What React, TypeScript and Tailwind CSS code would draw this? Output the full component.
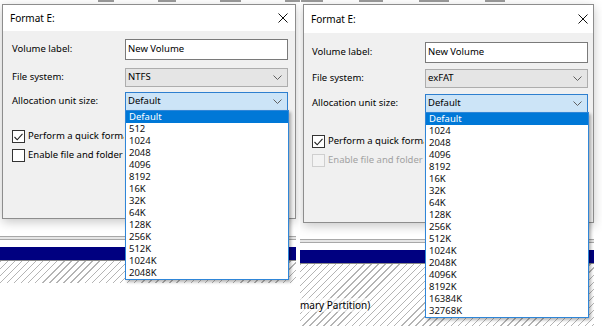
import clsx from "clsx";

const leftSizes = ["Default", "512", "1024", "2048", "4096", "8192", "16K", "32K", "64K", "128K", "256K", "512K", "1024K", "2048K"];
const rightSizes = ["Default", "1024", "2048", "4096", "8192", "16K", "32K", "64K", "128K", "256K", "512K", "1024K", "2048K", "4096K", "8192K", "16384K", "32768K"];

function Chevron() {
  return (
    <svg width="9" height="5" viewBox="0 0 9 5" className="shrink-0">
      <polyline points="0.5,0.5 4.5,4.5 8.5,0.5" fill="none" stroke="#606060" strokeWidth="1" />
    </svg>
  );
}

function CloseX() {
  return (
    <svg width="10" height="10" viewBox="0 0 10 10">
      <line x1="0.5" y1="0.5" x2="9.5" y2="9.5" stroke="#111" strokeWidth="1" />
      <line x1="9.5" y1="0.5" x2="0.5" y2="9.5" stroke="#111" strokeWidth="1" />
    </svg>
  );
}

function Checkbox({ checked, disabled, label }: { checked?: boolean; disabled?: boolean; label: string }) {
  return (
    <div className="flex items-center gap-[3px] h-[13px]">
      <span
        className={clsx(
          "w-[13px] h-[13px] shrink-0 border flex items-center justify-center",
          disabled ? "border-[#cfcfcf] bg-[#f3f3f3]" : "border-[#333333] bg-white"
        )}
      >
        {checked && (
          <svg width="9" height="8" viewBox="0 0 9 8">
            <polyline points="0.5,4 3.2,6.8 8.5,0.8" fill="none" stroke="#222" strokeWidth="1.1" />
          </svg>
        )}
      </span>
      {/* the open list covers the rest of the label */}
      <span className={clsx("w-[96px] overflow-hidden whitespace-nowrap", disabled ? "text-[#a2a2a2]" : "text-black")}>{label}</span>
    </div>
  );
}

function Panel({ right }: { right?: boolean }) {
  const sizes = right ? rightSizes : leftSizes;
  const fs = right ? "exFAT" : "NTFS";

  return (
    <div className={clsx("relative h-[326px] overflow-hidden bg-white flex flex-col", right ? "w-[302px]" : "w-[300px]")}>
      {/* bottoms of the volume list row behind the dialog */}
      <div className={clsx("h-[4px] shrink-0 flex items-start", right ? "gap-[36px] pl-[1px]" : "gap-[44px] pl-[98px]")}>
        <span className="w-[22px] h-[2px] bg-[#9a9a9a]" />
        <span className="w-[24px] h-[2px] bg-[#9a9a9a]" />
        <span className="w-[30px] h-[2px] bg-[#9a9a9a]" />
        <span className="w-[20px] h-[2px] bg-[#9a9a9a]" />
      </div>

      <div
        className={clsx(
          "relative shrink-0 border border-[#8d8d8d] bg-[#f0f0f0] flex flex-col shadow-[0_3px_10px_rgba(0,0,0,0.22)]",
          right ? "ml-[3px] w-[291px] h-[219px]" : "ml-[2px] w-[294px] h-[215px]"
        )}
      >
        <div className={clsx("bg-white flex items-center justify-between shrink-0 text-[10px] text-black", right ? "h-[28px] pl-[7px] pr-[5px]" : "h-[26px] pl-[7px] pr-[7px]")}>
          <span>Format E:</span>
          <CloseX />
        </div>

        <div className={clsx("flex flex-col text-[9.5px] text-black", right ? "pt-[9px] pl-[8px] pr-[5px]" : "pt-[8px] pl-[9px] pr-[7px]")}>
          <div className="flex items-center">
            <span className="w-[113px]">Volume label:</span>
            <div className="w-[163px] h-[21px] bg-white border border-[#7a7a7a] flex items-center pl-[2px]">New Volume</div>
          </div>
          <div className={clsx("flex items-center", right ? "mt-[6px]" : "mt-[8px]")}>
            <span className="w-[113px]">File system:</span>
            <div className="w-[163px] h-[19px] bg-[#e5e5e5] border border-[#adadad] flex items-center justify-between pl-[2px] pr-[5px]">
              <span>{fs}</span>
              <Chevron />
            </div>
          </div>
          <div className={clsx("flex items-center", right ? "mt-[6px]" : "mt-[5px]")}>
            <span className="w-[113px]">Allocation unit size:</span>
            <div className="relative w-[163px] h-[19px] bg-[#cce4f7] border border-[#2e7fcf] flex items-center justify-between pl-[2px] pr-[5px]">
              <span>Default</span>
              <Chevron />
              <ul className="absolute z-10 left-[-1px] top-full w-[164px] bg-white border border-[#2f86d8] shadow-[2px_2px_3px_rgba(0,0,0,0.3)]">
                {sizes.map((s, i) => (
                  <li
                    key={s}
                    className={clsx("h-[12px] leading-[12px] pl-[3px]", i === 0 ? "bg-[#0078d7] text-white" : "text-[#111]")}
                  >
                    {s}
                  </li>
                ))}
              </ul>
            </div>
          </div>

          <div className={right ? "mt-[22px]" : "mt-[19px]"}>
            <Checkbox checked label="Perform a quick format" />
          </div>
          <div className="mt-[6px]">
            <Checkbox disabled={right} label="Enable file and folder compression" />
          </div>
        </div>
      </div>

      {/* disk management graphical view behind */}
      <div className={clsx("shrink-0 h-[4px] border-y border-[#a8a8a8] bg-[#e6e6e6]", right ? "mt-[16px] mr-[8px]" : "mt-[17px] mr-[4px]")} />
      <div className={clsx("shrink-0 h-[13px] bg-[#000080] mt-[7px]", right ? "mr-[8px]" : "mr-[4px]")} />
      <div className={clsx("shrink-0 h-[1px] bg-[#8a8a8a]", right ? "mr-[8px]" : "mr-[4px]")} />
      <div
        className={clsx(
          "bg-[repeating-linear-gradient(135deg,#b4b4b4_0px,#b4b4b4_1px,#ffffff_1px,#ffffff_5px)] text-[10px] text-black",
          right ? "flex-1 mr-[8px] pt-[34px]" : "h-[22px] mr-[4px]"
        )}
      >
        {right && <span className="bg-white/60">mary Partition)</span>}
      </div>
    </div>
  );
}

export default function App() {
  return (
    <div className="w-[602px] h-[326px] bg-white flex overflow-hidden font-['Noto_Sans',sans-serif]">
      <Panel />
      <Panel right />
    </div>
  );
}
